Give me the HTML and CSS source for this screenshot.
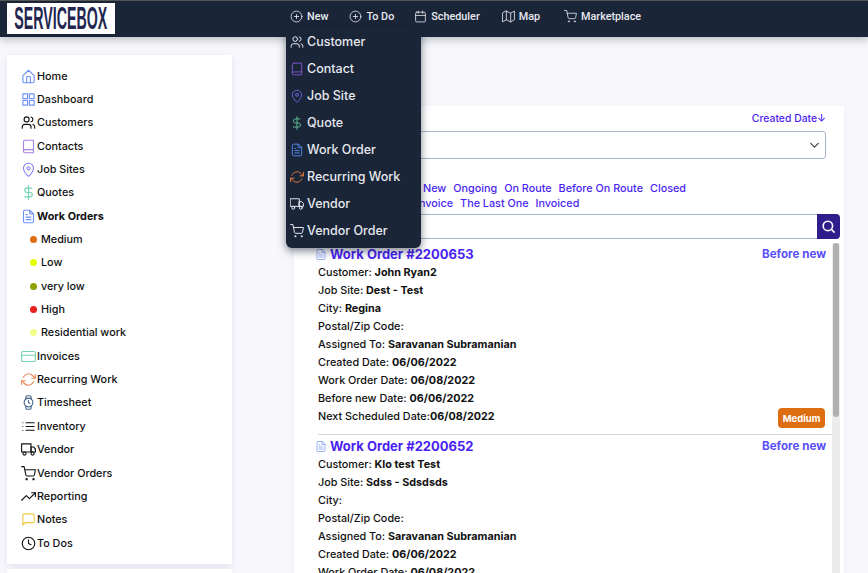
FILE: index.html
```html
<!DOCTYPE html>
<html lang="en">
<head>
<meta charset="utf-8">
<title>ServiceBox</title>
<link rel="stylesheet" href="styles.css">
</head>
<body>
<svg class="defs" width="0" height="0">
  <defs>
    <symbol id="i-home" viewBox="0 0 24 24"><path d="M3 10.5 12 2l9 8.5V20a2 2 0 0 1-2 2H5a2 2 0 0 1-2-2z"/><path d="M9 22v-9a1 1 0 0 1 1-1h4a1 1 0 0 1 1 1v9"/></symbol>
    <symbol id="i-grid" viewBox="0 0 24 24"><rect x="3" y="3" width="7.5" height="7.5"/><rect x="13.5" y="3" width="7.5" height="7.5"/><rect x="3" y="13.5" width="7.5" height="7.5"/><rect x="13.5" y="13.5" width="7.5" height="7.5"/></symbol>
    <symbol id="i-users" viewBox="0 0 24 24"><path d="M16 21v-2a4 4 0 0 0-4-4H6a4 4 0 0 0-4 4v2"/><circle cx="9" cy="7" r="4"/><path d="M22 21v-2a4 4 0 0 0-3-3.87"/><path d="M16 3.13a4 4 0 0 1 0 7.75"/></symbol>
    <symbol id="i-book" viewBox="0 0 24 24"><path d="M4 19.5A2.5 2.5 0 0 1 6.5 17H20"/><path d="M6.5 2H20v20H6.5A2.5 2.5 0 0 1 4 19.5v-15A2.5 2.5 0 0 1 6.5 2z"/></symbol>
    <symbol id="i-pin" viewBox="0 0 24 24"><path d="M20 10c0 6-8 13-8 13s-8-7-8-13a8 8 0 0 1 16 0z"/><circle cx="12" cy="10" r="2.5"/></symbol>
    <symbol id="i-dollar" viewBox="0 0 24 24"><path d="M12 1v22"/><path d="M17 5H9.5a3.5 3.5 0 0 0 0 7h5a3.5 3.5 0 0 1 0 7H6"/></symbol>
    <symbol id="i-file" viewBox="0 0 24 24"><path d="M14 2H6a2 2 0 0 0-2 2v16a2 2 0 0 0 2 2h12a2 2 0 0 0 2-2V8z"/><path d="M14 2v6h6"/><path d="M8 13h8M8 17h8M8 9h2"/></symbol>
    <symbol id="i-card" viewBox="0 0 24 24"><rect x="1" y="4" width="22" height="16" rx="2"/><path d="M1 10h22"/></symbol>
    <symbol id="i-refresh" viewBox="0 0 24 24"><path d="M23 4v6h-6"/><path d="M1 20v-6h6"/><path d="M3.5 9a9 9 0 0 1 14.9-3.4L23 10M1 14l4.6 4.4A9 9 0 0 0 20.5 15"/></symbol>
    <symbol id="i-watch" viewBox="0 0 24 24"><circle cx="12" cy="12" r="7"/><path d="M12 9v3l2 1.5"/><path d="m16.5 17.3-.4 3.7a2 2 0 0 1-2 1.8H9.9a2 2 0 0 1-2-1.8l-.4-3.7m0-10.6.4-3.7a2 2 0 0 1 2-1.8h4.2a2 2 0 0 1 2 1.8l.4 3.7"/></symbol>
    <symbol id="i-list" viewBox="0 0 24 24"><path d="M8 6h13M8 12h13M8 18h13M3 6h.01M3 12h.01M3 18h.01"/></symbol>
    <symbol id="i-truck" viewBox="0 0 24 24"><path d="M1 3h15v13H1z"/><path d="M16 8h4l3 3v5h-7z"/><circle cx="5.5" cy="18.5" r="2.5"/><circle cx="18.5" cy="18.5" r="2.5"/></symbol>
    <symbol id="i-cart" viewBox="0 0 24 24"><circle cx="9" cy="21" r="1"/><circle cx="20" cy="21" r="1"/><path d="M1 1h4l2.7 13.4a2 2 0 0 0 2 1.6h9.7a2 2 0 0 0 2-1.6L23 6H6"/></symbol>
    <symbol id="i-trend" viewBox="0 0 24 24"><path d="m23 6-9.5 9.5-5-5L1 18"/><path d="M17 6h6v6"/></symbol>
    <symbol id="i-note" viewBox="0 0 24 24"><path d="M21 15a2 2 0 0 1-2 2H7l-4 4V5a2 2 0 0 1 2-2h14a2 2 0 0 1 2 2z"/></symbol>
    <symbol id="i-clock" viewBox="0 0 24 24"><circle cx="12" cy="12" r="10"/><path d="M12 6v6l4 2"/></symbol>
    <symbol id="i-plus" viewBox="0 0 24 24"><circle cx="12" cy="12" r="10"/><path d="M12 8v8M8 12h8"/></symbol>
    <symbol id="i-cal" viewBox="0 0 24 24"><rect x="3" y="4" width="18" height="18" rx="2"/><path d="M16 2v4M8 2v4M3 10h18"/></symbol>
    <symbol id="i-map" viewBox="0 0 24 24"><path d="M1 6v16l7-4 8 4 7-4V2l-7 4-8-4z"/><path d="M8 2v16M16 6v16"/></symbol>
    <symbol id="i-search" viewBox="0 0 24 24"><circle cx="11" cy="11" r="7.5"/><path d="m21 21-4.6-4.6"/></symbol>
    <symbol id="i-chev" viewBox="0 0 24 24"><path d="m5 8 7 7 7-7"/></symbol>
  </defs>
</svg>

<header class="topbar">
  <div class="logo"><span class="logo-text">SERVICEBOX</span></div>
  <nav class="topnav">
    <a class="topnav-item gap-a"><svg class="ico ico-top"><use href="#i-plus"/></svg>New</a>
    <a class="topnav-item gap-b"><svg class="ico ico-top"><use href="#i-plus"/></svg>To Do</a>
    <a class="topnav-item gap-c"><svg class="ico ico-top"><use href="#i-cal"/></svg>Scheduler</a>
    <a class="topnav-item gap-d"><svg class="ico ico-top"><use href="#i-map"/></svg>Map</a>
    <a class="topnav-item"><svg class="ico ico-top"><use href="#i-cart"/></svg>Marketplace</a>
    <ul class="dropdown">
      <li><svg class="ico c-white"><use href="#i-users"/></svg>Customer</li>
      <li><svg class="ico c-purple"><use href="#i-book"/></svg>Contact</li>
      <li><svg class="ico c-indigo"><use href="#i-pin"/></svg>Job Site</li>
      <li><svg class="ico c-green"><use href="#i-dollar"/></svg>Quote</li>
      <li><svg class="ico c-blue"><use href="#i-file"/></svg>Work Order</li>
      <li><svg class="ico c-orange"><use href="#i-refresh"/></svg>Recurring Work</li>
      <li><svg class="ico c-white"><use href="#i-truck"/></svg>Vendor</li>
      <li><svg class="ico c-white"><use href="#i-cart"/></svg>Vendor Order</li>
    </ul>
  </nav>
</header>

<div class="layout">
  <aside class="sidebar">
    <ul class="side-card">
      <li class="side-item"><svg class="ico c-lblue"><use href="#i-home"/></svg>Home</li>
      <li class="side-item"><svg class="ico c-lblue"><use href="#i-grid"/></svg>Dashboard</li>
      <li class="side-item"><svg class="ico c-black"><use href="#i-users"/></svg>Customers</li>
      <li class="side-item"><svg class="ico c-lpurple"><use href="#i-book"/></svg>Contacts</li>
      <li class="side-item"><svg class="ico c-lindigo"><use href="#i-pin"/></svg>Job Sites</li>
      <li class="side-item"><svg class="ico c-lgreen"><use href="#i-dollar"/></svg>Quotes</li>
      <li class="side-item is-active"><svg class="ico c-lblue"><use href="#i-file"/></svg>Work Orders</li>
      <li class="side-sub"><span class="dot dot-medium"></span>Medium</li>
      <li class="side-sub"><span class="dot dot-low"></span>Low</li>
      <li class="side-sub"><span class="dot dot-vlow"></span>very low</li>
      <li class="side-sub"><span class="dot dot-high"></span>High</li>
      <li class="side-sub"><span class="dot dot-res"></span>Residential work</li>
      <li class="side-item"><svg class="ico c-lgreen"><use href="#i-card"/></svg>Invoices</li>
      <li class="side-item"><svg class="ico c-lorange"><use href="#i-refresh"/></svg>Recurring Work</li>
      <li class="side-item"><svg class="ico c-slate"><use href="#i-watch"/></svg>Timesheet</li>
      <li class="side-item"><svg class="ico c-black"><use href="#i-list"/></svg>Inventory</li>
      <li class="side-item"><svg class="ico c-black"><use href="#i-truck"/></svg>Vendor</li>
      <li class="side-item"><svg class="ico c-black"><use href="#i-cart"/></svg>Vendor Orders</li>
      <li class="side-item"><svg class="ico c-black"><use href="#i-trend"/></svg>Reporting</li>
      <li class="side-item"><svg class="ico c-yellow"><use href="#i-note"/></svg>Notes</li>
      <li class="side-item"><svg class="ico c-black"><use href="#i-clock"/></svg>To Dos</li>
    </ul>
    <div class="side-card side-next"></div>
  </aside>

  <main class="panel">
    <div class="sort-row"><a class="sort-link">Created Date↓</a></div>
    <div class="select-box"><svg class="ico chev"><use href="#i-chev"/></svg></div>
    <div class="status-row status-one">
      <a>New</a><a>Ongoing</a><a>On Route</a><a>Before On Route</a><a>Closed</a>
    </div>
    <div class="status-row status-two">
      <a>Invoice</a><a>The Last One</a><a>Invoiced</a>
    </div>
    <div class="search-row">
      <div class="search-input"></div>
      <button class="search-btn"><svg class="ico ico-search"><use href="#i-search"/></svg></button>
    </div>
    <div class="list-wrap">
      <div class="list">
        <article class="order">
          <div class="order-head">
            <h2 class="order-title"><svg class="ico c-lblue"><use href="#i-file"/></svg>Work Order #2200653</h2>
            <span class="order-status">Before new</span>
          </div>
          <p>Customer: <b>John Ryan2</b></p>
          <p>Job Site: <b>Dest - Test</b></p>
          <p>City: <b>Regina</b></p>
          <p>Postal/Zip Code:</p>
          <p>Assigned To: <b>Saravanan Subramanian</b></p>
          <p>Created Date: <b>06/06/2022</b></p>
          <p>Work Order Date: <b>06/08/2022</b></p>
          <p>Before new Date: <b>06/06/2022</b></p>
          <div class="order-foot">
            <p>Next Scheduled Date:<b>06/08/2022</b></p>
            <span class="badge">Medium</span>
          </div>
        </article>
        <article class="order">
          <div class="order-head">
            <h2 class="order-title"><svg class="ico c-lblue"><use href="#i-file"/></svg>Work Order #2200652</h2>
            <span class="order-status">Before new</span>
          </div>
          <p>Customer: <b>Klo test Test</b></p>
          <p>Job Site: <b>Sdss - Sdsdsds</b></p>
          <p>City:</p>
          <p>Postal/Zip Code:</p>
          <p>Assigned To: <b>Saravanan Subramanian</b></p>
          <p>Created Date: <b>06/06/2022</b></p>
          <p>Work Order Date: <b>06/08/2022</b></p>
        </article>
      </div>
      <div class="scrollbar"><div class="scroll-thumb"></div></div>
    </div>
  </main>
</div>
</body>
</html>
```
FILE: styles.css
```css
* { box-sizing: border-box; }
html, body { margin: 0; height: 573px; overflow: hidden; }
body {
  background: #f8f8fc;
  font-family: Inter, "Open Sans", sans-serif;
  font-size: 10.8px;
  color: #111;
}
.defs { position: absolute; }
ul { list-style: none; margin: 0; padding: 0; }
p, h2 { margin: 0; }

.ico {
  width: 14px;
  height: 14px;
  flex: none;
  fill: none;
  stroke: currentColor;
  stroke-width: 1.6;
  stroke-linecap: round;
  stroke-linejoin: round;
}
.c-white { color: #e6e8ee; }
.c-purple { color: #7c55c8; }
.c-indigo { color: #6a63d8; }
.c-green { color: #5cb792; }
.c-blue { color: #4f86e6; }
.c-orange { color: #e67a3e; }
.c-black { color: #111; }
.c-lblue { color: #6f92f8; }
.c-lpurple { color: #a784e8; }
.c-lindigo { color: #8b82f5; }
.c-lgreen { color: #74d3ae; }
.c-lorange { color: #ee8d5c; }
.c-slate { color: #46688c; }
.c-yellow { color: #f0c93c; }

/* top bar */
.topbar {
  height: 37px;
  background: #1a2538;
  border-top: 1px solid #555;
  display: flex;
  align-items: flex-start;
  padding: 2px 0 0 7px;
  box-shadow: 0 3px 8px rgba(30, 40, 60, .28);
  position: relative;
  z-index: 5;
}
.logo {
  width: 108px;
  height: 31px;
  background: #fff;
  display: flex;
  align-items: center;
  justify-content: center;
  overflow: hidden;
}
.logo-text {
  font-family: "Liberation Sans", sans-serif;
  font-weight: 700;
  font-size: 29px;
  color: #22264f;
  transform: scale(.49, 1.06);
  white-space: nowrap;
}
.topnav {
  position: relative;
  display: flex;
  align-items: center;
  height: 14px;
  margin: 6px 0 0 175px;
  font-family: Roboto, sans-serif;
  font-weight: 500;
  font-size: 10.8px;
  color: #e8eaf0;
}
.topnav-item { display: flex; align-items: center; gap: 4px; }
.ico-top { width: 13px; height: 13px; stroke-width: 1.5; }
.gap-a { margin-right: 21px; }
.gap-b { margin-right: 20px; }
.gap-c { margin-right: 22px; }
.gap-d { margin-right: 24px; }

.dropdown {
  position: absolute;
  left: -4px;
  top: 19px;
  width: 135px;
  height: 220px;
  background: #1a2538;
  border-radius: 0 0 6px 6px;
  box-shadow: 0 3px 8px rgba(20, 30, 50, .55);
  font-family: Inter, sans-serif;
  font-weight: 500;
  font-size: 12.5px;
  color: #e6e8ee;
}
.dropdown li {
  height: 27px;
  display: flex;
  align-items: center;
  gap: 3px;
  padding-left: 4px;
}
.dropdown .ico { stroke-width: 1.7; }

/* layout */
.layout { display: flex; align-items: flex-start; padding-left: 7px; }
.sidebar { width: 225px; margin-top: 18px; display: flex; flex-direction: column; gap: 5px; }
.side-card {
  background: #fff;
  padding: 9.5px 0 9px 14px;
  height: 509px;
  box-shadow: 0 2px 8px rgba(120, 120, 190, .16);
}
.side-next { height: 4px; padding: 0; }
.side-item, .side-sub {
  height: 23.35px;
  display: flex;
  align-items: center;
  font-weight: 500;
  gap: 1px;
}
.side-item .ico { width: 15px; height: 15px; stroke-width: 1.8; }
.side-sub { padding-left: 9px; gap: 4px; }
.is-active { font-weight: 700; }
.dot { width: 7px; height: 7px; border-radius: 50%; flex: none; }
.dot-medium { background: #de6e12; }
.dot-low { background: #e6ff00; }
.dot-vlow { background: #8ea100; }
.dot-high { background: #e8201f; }
.dot-res { background: #f2ff8c; }

/* panel */
.panel {
  width: 550px;
  height: 467px;
  margin: 69px 0 0 62px;
  background: #fff;
  padding: 6px 4px 0 12px;
  box-shadow: 0 2px 8px rgba(120, 120, 190, .1);
  overflow: hidden;
}
.sort-row { display: flex; justify-content: flex-end; padding-right: 14px; height: 13px; line-height: 13px; }
.sort-link { color: #4a1ff0; font-weight: 500; font-size: 10.4px; }
.select-box {
  height: 28px;
  margin: 6px 14px 0 0;
  border: 1px solid #a9b5c6;
  border-radius: 3px;
  display: flex;
  align-items: center;
  justify-content: flex-end;
  padding-right: 4px;
}
.chev { width: 13px; height: 13px; color: #444; stroke-width: 2.2; }
.status-row { display: flex; gap: 7px; color: #4a1ff0; font-weight: 500; height: 15px; line-height: 15px; }
.status-one { margin-top: 22px; padding-left: 117px; }
.status-two { padding-left: 110px; }
.search-row { display: flex; margin-top: 3px; height: 25px; }
.search-input { flex: 1; border: 1px solid #a9b5c6; border-right: 0; }
.search-btn {
  width: 23px;
  border: 0;
  padding: 0;
  background: #2e1d8a;
  border-radius: 0 4px 4px 0;
  display: flex;
  align-items: center;
  justify-content: center;
}
.ico-search { width: 15px; height: 15px; color: #fff; stroke-width: 2.6; }

.list-wrap { display: flex; margin-top: 4px; height: 330px; }
.list { flex: 1; padding-left: 12px; min-width: 0; }
.order { border-bottom: 1px solid #d8d8d8; padding: 0 7px 6px 0; height: 192px; }
.order p { height: 18px; line-height: 18px; font-weight: 500; }
.order b { font-weight: 700; }
.order-head { display: flex; justify-content: space-between; align-items: center; height: 21px; padding-top: 1px; }
.order-title { display: flex; align-items: center; gap: 3px; margin-left: -3px; font-size: 13px; font-weight: 700; color: #4a1ff0; }
.order-title .ico { width: 12px; height: 13px; stroke-width: 1.4; }
.order-status { color: #5a4ff5; font-weight: 700; font-size: 11.6px; }
.order-foot { display: flex; justify-content: space-between; align-items: flex-start; }
.badge {
  background: #de6e12;
  color: #fff;
  font-size: 9.5px;
  font-weight: 700;
  width: 47px;
  height: 20px;
  margin-right: 1px;
  border-radius: 4px;
  display: flex;
  align-items: center;
  justify-content: center;
}
.scrollbar { width: 8px; margin-left: -1px; background: #ececec; height: 330px; }
.scroll-thumb { width: 6px; height: 174px; margin-left: 1px; background: #b0b0b0; border-radius: 3px; }
```
